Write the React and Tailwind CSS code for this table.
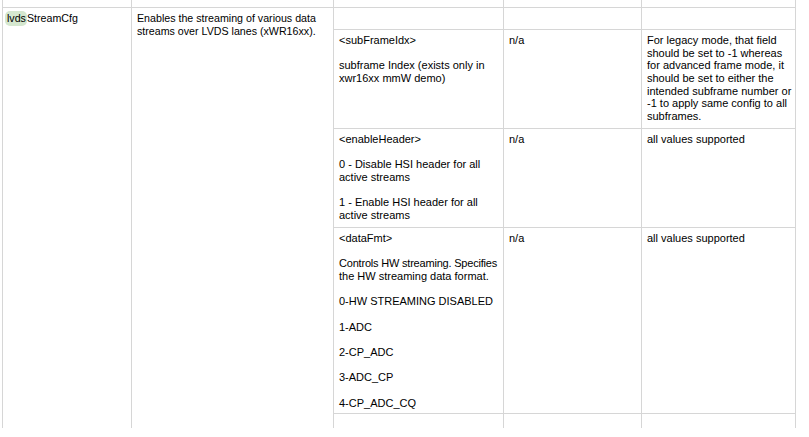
const LINE = 'border-[#d6d6d6]'

const ROWS = [
  {
    h: 'h-[99px]',
    param: ['<subFrameIdx>', '', 'subframe Index (exists only in', 'xwr16xx mmW demo)'],
    value: ['n/a'],
    note: [
      'For legacy mode, that field',
      'should be set to -1 whereas',
      'for advanced frame mode, it',
      'should be set to either the',
      'intended subframe number or',
      '-1 to apply same config to all',
      'subframes.',
    ],
  },
  {
    h: 'h-[99px]',
    param: [
      '<enableHeader>',
      '',
      '0 - Disable HSI header for all',
      'active streams',
      '',
      '1 - Enable HSI header for all',
      'active streams',
    ],
    value: ['n/a'],
    note: ['all values supported'],
  },
  {
    h: 'h-[186px]',
    param: [
      '<dataFmt>',
      '',
      'Controls HW streaming. Specifies',
      'the HW streaming data format.',
      '',
      '0-HW STREAMING DISABLED',
      '',
      '1-ADC',
      '',
      '2-CP_ADC',
      '',
      '3-ADC_CP',
      '',
      '4-CP_ADC_CQ',
    ],
    value: ['n/a'],
    note: ['all values supported'],
  },
]

function Lines({ lines }) {
  return lines.map((l, i) => (
    <div key={i} className={`whitespace-nowrap ${l.length > 30 ? 'tracking-[-0.2px]' : ''}`}>
      {l === '' ? '\u00a0' : l}
    </div>
  ))
}

function NestedRow({ row }) {
  return (
    <div className={`flex ${row.h} border-b ${LINE} leading-[12.65px]`}>
      <div className="w-[169px] pl-[5px] pt-[4px]">
        <Lines lines={row.param} />
      </div>
      <div className={`w-[138px] border-l ${LINE} pl-[5px] pt-[4px]`}>
        <Lines lines={row.value} />
      </div>
      <div className={`w-[154px] border-l ${LINE} pl-[5px] pt-[4px]`}>
        <Lines lines={row.note} />
      </div>
    </div>
  )
}

export default function App() {
  return (
    <div className="w-[809px] h-[437px] overflow-hidden bg-white text-black text-[11px] font-['Liberation_Sans',Arial,sans-serif]">
      <div className="ml-[2px] w-[794px]">
        {/* tail of the previous row */}
        <div className={`flex h-[8px] border-b border-r ${LINE}`}>
          <div className={`w-[129px] border-l ${LINE}`} />
          <div className={`w-[202px] border-l ${LINE}`} />
          <div className={`w-[170px] border-l ${LINE}`} />
          <div className={`w-[138px] border-l ${LINE}`} />
          <div className={`flex-1 border-l ${LINE}`} />
        </div>

        <div className={`flex h-[420px] border-r ${LINE}`}>
          <div className={`w-[129px] border-l ${LINE} pl-[4px] pt-[4px] leading-[13px] text-[10.67px]`}>
            <span className="inline-block -ml-[2px] pl-[2px] pr-[1px] py-[1px] -my-[1px] rounded-[5px] bg-[#d5e7cf]">lvds</span>
            StreamCfg
          </div>
          <div className={`w-[202px] border-l ${LINE} pl-[5px] pt-[4px] leading-[13px] text-[10.67px]`}>
            <div>Enables the streaming of various data</div>
            <div>streams over LVDS lanes (xWR16xx).</div>
          </div>
          <div className={`flex-1 border-l ${LINE} flex flex-col`}>
            <div className={`flex h-[22px] border-b ${LINE}`}>
              <div className="w-[169px]" />
              <div className={`w-[138px] border-l ${LINE}`} />
              <div className={`w-[154px] border-l ${LINE}`} />
            </div>
            {ROWS.map((r, i) => (
              <NestedRow key={i} row={r} />
            ))}
            <div className="flex flex-1">
              <div className="w-[169px]" />
              <div className={`w-[138px] border-l ${LINE}`} />
              <div className={`w-[154px] border-l ${LINE}`} />
            </div>
          </div>
        </div>
      </div>
    </div>
  )
}
